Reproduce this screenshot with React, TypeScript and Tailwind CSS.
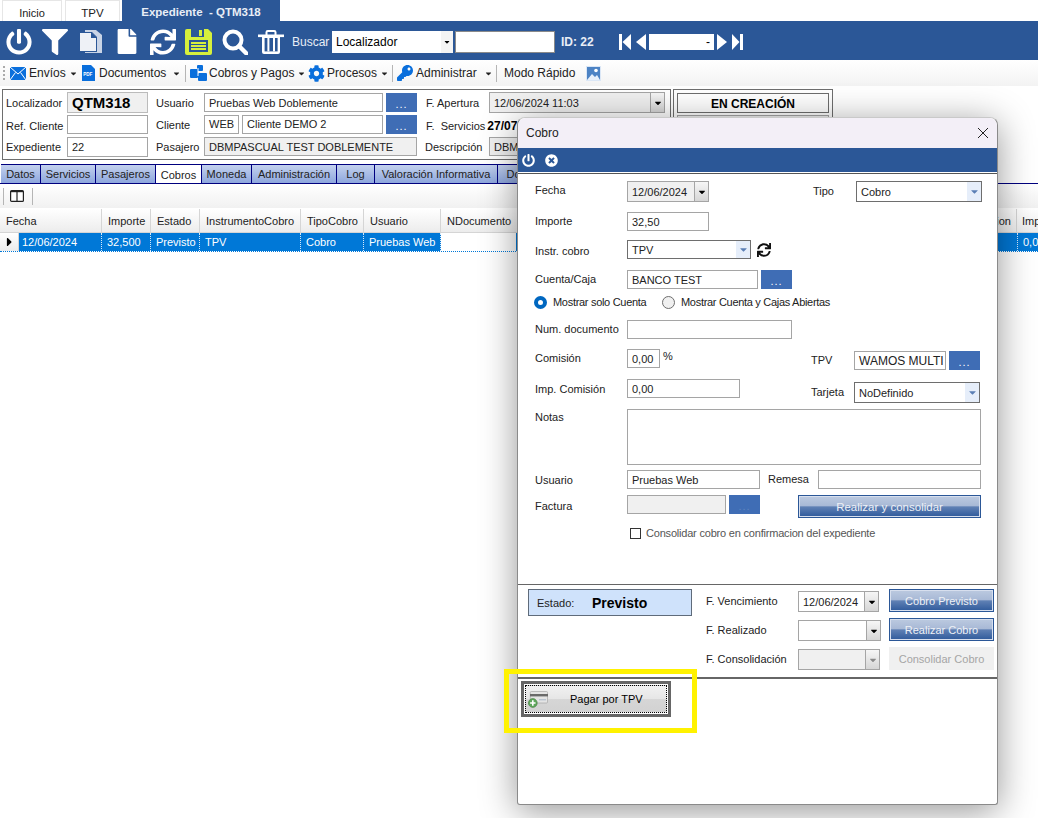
import type { ReactNode } from 'react'
import {
  FaPowerOff,
  FaFilter,
  FaFile,
  FaSync,
  FaTimesCircle,
  FaKey,
  FaCog,
  FaCaretDown,
  FaCaretRight,
} from 'react-icons/fa'

function Field({ className = '', children }: { className?: string; children?: ReactNode }) {
  return (
    <div className={`flex items-center border border-[#a5a5a5] pl-1 overflow-hidden shrink-0 ${className}`}>
      {children}
    </div>
  )
}

function Dots({ className = '' }: { className?: string }) {
  return (
    <div className={`flex justify-center items-end pb-[2px] bg-[#3f6db5] text-white text-[11px] leading-[12px] tracking-[1px] shrink-0 ${className}`}>
      ...
    </div>
  )
}

function DateDrop({ className = '', value, dark = true }: { className?: string; value?: string; dark?: boolean }) {
  return (
    <div className={`flex border border-[#a5a5a5] shrink-0 ${className}`}>
      <div className="flex-1 pl-1 flex items-center overflow-hidden">{value}</div>
      <div className="w-[14px] border-l border-[#a5a5a5] bg-[linear-gradient(#f6f6f6,#d6d6d6)] flex items-center justify-center">
        <FaCaretDown className={`w-[10px] h-[10px] ${dark ? 'text-black' : 'text-[#8a8a8a]'}`} />
      </div>
    </div>
  )
}

function Combo({ className = '', value }: { className?: string; value: string }) {
  return (
    <div className={`flex border border-[#6e6e6e] bg-white shrink-0 ${className}`}>
      <div className="flex-1 pl-1 flex items-center">{value}</div>
      <div className="w-[14px] bg-[#e6eefa] flex items-center justify-center">
        <FaCaretDown className="w-[11px] h-[11px] text-[#5b7fb5]" />
      </div>
    </div>
  )
}

function BlueButton({ className = '', children }: { className?: string; children: ReactNode }) {
  return (
    <div className={`flex items-center justify-center border border-[#2b5797] outline outline-1 -outline-offset-2 outline-[#d7dfee] text-[#eef1f6] bg-[linear-gradient(#bccae0_0%,#a8b9d6_46%,#5f80b4_52%,#2f5a9b_100%)] shrink-0 ${className}`}>
      {children}
    </div>
  )
}

function Caret({ className = '' }: { className?: string }) {
  return <FaCaretDown className={`w-[9px] h-[9px] text-[#222] shrink-0 ${className}`} />
}

function ToolbarSep({ className = '' }: { className?: string }) {
  return <div className={`w-px h-[17px] bg-[#b5b5b5] shrink-0 ${className}`} />
}

function SaveIcon() {
  return (
    <svg viewBox="0 0 27 26" className="w-[27px] h-[26px] shrink-0">
      <path d="M2 0h21l4 4v20a2 2 0 0 1-2 2H2a2 2 0 0 1-2-2V2a2 2 0 0 1 2-2z" fill="#d6f03c" />
      <rect x="6" y="0" width="13" height="8" fill="#2b5797" />
      <rect x="14" y="1" width="3" height="6" fill="#d6f03c" />
      <rect x="4" y="11" width="19" height="12" fill="#2b5797" />
      <rect x="6" y="13" width="15" height="2" fill="#d6f03c" />
      <rect x="6" y="16" width="15" height="2" fill="#d6f03c" />
      <rect x="6" y="19" width="15" height="2" fill="#d6f03c" />
    </svg>
  )
}

function CopyIcon() {
  return (
    <svg viewBox="0 0 23 23" className="w-[23px] h-[23px] shrink-0">
      <path d="M6 0h11l6 5v18H6z" fill="#c9d4e6" />
      <path d="M0 2h13l5 5v15H0z" fill="#2b5797" />
      <path d="M1 3h11.5l4.5 4.5V21H1z" fill="#eef1f6" />
      <path d="M12 2l6 6h-6z" fill="#2b5797" />
    </svg>
  )
}

function SearchIcon() {
  return (
    <svg viewBox="0 0 26 26" className="w-[26px] h-[26px] shrink-0">
      <circle cx="11" cy="11" r="8.5" fill="none" stroke="#fff" strokeWidth="4" />
      <path d="M17 17l7.5 7.5" stroke="#fff" strokeWidth="4.4" strokeLinecap="round" />
    </svg>
  )
}

function TrashIcon() {
  return (
    <svg viewBox="0 0 26 24" className="w-[26px] h-[24px] shrink-0">
      <path d="M0 4.5h26v2.6H0z" fill="#fff" />
      <path d="M8.5 5V2.2A1.2 1.2 0 0 1 9.7 1h6.6a1.2 1.2 0 0 1 1.2 1.2V5" fill="none" stroke="#fff" strokeWidth="2" />
      <path d="M4 6.5h18V22a2 2 0 0 1-2 2H6a2 2 0 0 1-2-2z" fill="#fff" />
      <rect x="6.6" y="8" width="13" height="13.4" fill="#2b5797" />
      <rect x="9.4" y="8" width="2" height="13.4" fill="#fff" />
      <rect x="15" y="8" width="2" height="13.4" fill="#fff" />
    </svg>
  )
}

function NavFirst() {
  return (
    <svg viewBox="0 0 12 16" className="w-[12px] h-[16px] shrink-0">
      <rect width="3" height="16" fill="#fff" />
      <path d="M12 0v16L3.5 8z" fill="#fff" />
    </svg>
  )
}

function NavPrev() {
  return (
    <svg viewBox="0 0 10 16" className="w-[10px] h-[16px] shrink-0">
      <path d="M10 0v16L0 8z" fill="#fff" />
    </svg>
  )
}

function NavNext() {
  return (
    <svg viewBox="0 0 10 16" className="w-[10px] h-[16px] shrink-0">
      <path d="M0 0v16L10 8z" fill="#fff" />
    </svg>
  )
}

function NavLast() {
  return (
    <svg viewBox="0 0 11 16" className="w-[11px] h-[16px] shrink-0">
      <rect x="8" width="3" height="16" fill="#fff" />
      <path d="M0 0v16L7.5 8z" fill="#fff" />
    </svg>
  )
}

function MailIcon() {
  return (
    <svg viewBox="0 0 16 13" className="w-[16px] h-[13px] shrink-0">
      <rect width="16" height="13" fill="#0a6fdc" />
      <path d="M0 0l8 7 8-7M0 13l5.5-7.5M16 13l-5.5-7.5" fill="none" stroke="#fff" strokeWidth="1" />
    </svg>
  )
}

function PdfIcon() {
  return (
    <svg viewBox="0 0 13 16" className="w-[13px] h-[16px] shrink-0">
      <path d="M0 0h9l4 4v12H0z" fill="#0a6fdc" />
      <text x="1.2" y="10.5" fontSize="4.6" fontWeight="700" fill="#fff" fontFamily="Liberation Sans, sans-serif">PDF</text>
    </svg>
  )
}

function CobrosIcon() {
  return (
    <svg viewBox="0 0 17 16" className="w-[17px] h-[16px] shrink-0">
      <rect x="0" y="4" width="8" height="9" rx="1" fill="#0a6fdc" />
      <rect x="7" y="0" width="6" height="6" rx="1" fill="#0a6fdc" />
      <rect x="8" y="8" width="9" height="8" rx="1" fill="#0a6fdc" />
      <path d="M8 3v8" stroke="#fff" strokeWidth="1" />
    </svg>
  )
}

function PictureIcon() {
  return (
    <svg viewBox="0 0 15 15" className="w-[15px] h-[15px] shrink-0">
      <rect width="15" height="15" fill="#dbe7f6" />
      <rect x="1" y="1" width="13" height="13" fill="#4d83c4" />
      <path d="M1 14l5-6 3 3 2-2 3 5z" fill="#e8f0fa" />
      <circle cx="10" cy="4.5" r="1.8" fill="#fff" />
    </svg>
  )
}

function CardPlusIcon() {
  return (
    <svg viewBox="0 0 20 17" className="w-[20px] h-[17px] shrink-0">
      <rect x="2.3" y="0.5" width="17.2" height="11.5" rx="1" fill="#e4e4e4" stroke="#a8a8a8" strokeWidth="0.7" />
      <rect x="2" y="3" width="18" height="2.4" fill="#6a6a6a" />
      <rect x="11" y="8" width="7" height="1.4" fill="#b9c4d0" />
      <circle cx="4.8" cy="12" r="4.4" fill="#5fa75c" stroke="#3f7c3d" strokeWidth="0.6" />
      <path d="M4.8 9.3v5.4M2.1 12h5.4" stroke="#fff" strokeWidth="1.6" />
    </svg>
  )
}

const mainTabs = [
  { label: 'Datos', w: 'w-[40px]' },
  { label: 'Servicios', w: 'w-[55px]' },
  { label: 'Pasajeros', w: 'w-[60px]' },
  { label: 'Cobros', w: 'w-[46px]', active: true },
  { label: 'Moneda', w: 'w-[50px]' },
  { label: 'Administración', w: 'w-[85px]' },
  { label: 'Log', w: 'w-[38px]' },
  { label: 'Valoración Informativa', w: 'w-[123px]' },
  { label: 'Documentos', w: 'w-[80px]' },
]

const gridCols = [
  { head: 'Fecha', cell: '12/06/2024', w: 'w-[83px]' },
  { head: 'Importe', cell: '32,500', w: 'w-[49px]' },
  { head: 'Estado', cell: 'Previsto', w: 'w-[49px]' },
  { head: 'InstrumentoCobro', cell: 'TPV', w: 'w-[101px]' },
  { head: 'TipoCobro', cell: 'Cobro', w: 'w-[63px]' },
  { head: 'Usuario', cell: 'Pruebas Web', w: 'w-[77px]' },
]

function CobroDialog() {
  return (
    <div className="absolute left-[517px] top-[117px] w-[481px] h-[688px] flex flex-col bg-white rounded-t-lg rounded-b-[3px] border border-[#8a8a8a] border-t-[#c9c9c9] shadow-[0_6px_36px_rgba(0,0,0,0.42)] text-[#222]">
      <div className="h-[30px] bg-[#f3eff7] rounded-t-lg flex items-center justify-between pl-2 pr-[8px] shrink-0 text-[12px]">
        <span>Cobro</span>
        <svg viewBox="0 0 12 12" className="w-[12px] h-[12px]">
          <path d="M1 1l10 10M11 1L1 11" stroke="#222" strokeWidth="1" />
        </svg>
      </div>
      <div className="h-[24px] bg-[#2b5797] flex items-center gap-[10px] pl-[4px] shrink-0">
        <FaPowerOff className="w-[13px] h-[13px] text-white" />
        <FaTimesCircle className="w-[13px] h-[13px] text-white" />
      </div>
      <div className="border-t border-[#555] mt-px h-[411px] shrink-0 flex flex-col pl-[17px]">
        <div className="flex mt-[7px] h-[21px]">
          <div className="w-[92px] leading-[19px]">Fecha</div>
          <div className="flex w-[82px] border border-[#a5a5a5] bg-[#f0f0f0]">
            <div className="flex-1 pl-1 flex items-center">12/06/2024</div>
            <div className="w-[14px] border-l border-[#a5a5a5] bg-[linear-gradient(#f6f6f6,#d6d6d6)] flex items-center justify-center">
              <FaCaretDown className="w-[10px] h-[10px] text-black" />
            </div>
          </div>
          <div className="ml-[104px] w-[43px] leading-[21px]">Tipo</div>
          <Combo className="w-[126px]" value="Cobro" />
        </div>
        <div className="flex mt-[10px] h-[19px]">
          <div className="w-[92px] leading-[18px]">Importe</div>
          <Field className="w-[82px]">32,50</Field>
        </div>
        <div className="flex mt-[9px] h-[19px] items-center">
          <div className="w-[92px] pt-[2px]">Instr. cobro</div>
          <Combo className="w-[124px] h-[19px]" value="TPV" />
          <FaSync className="ml-[6px] w-[14px] h-[14px] text-[#111]" />
        </div>
        <div className="flex mt-[11px] h-[19px]">
          <div className="w-[92px] leading-[19px]">Cuenta/Caja</div>
          <Field className="w-[131px]">BANCO TEST</Field>
          <Dots className="ml-[3px] w-[31px]" />
        </div>
        <div className="flex mt-[6px] h-[14px] items-center -ml-[1px] tracking-[-0.3px]">
          <div className="w-[13px] h-[13px] rounded-full border-[4px] border-[#0067c0] bg-white" />
          <span className="ml-[6px] w-[109px]">Mostrar solo Cuenta</span>
          <div className="w-[13px] h-[13px] rounded-full border border-[#6e6e6e] bg-[#f0f0f0]" />
          <span className="ml-[6px]">Mostrar Cuenta y Cajas Abiertas</span>
        </div>
        <div className="flex mt-[11px] h-[19px]">
          <div className="w-[92px] leading-[19px]">Num. documento</div>
          <Field className="w-[165px]" />
        </div>
        <div className="flex mt-[10px] h-[21px]">
          <div className="w-[92px] leading-[19px]">Comisión</div>
          <Field className="w-[33px] h-[19px]">0,00</Field>
          <span className="ml-[3px] w-[148px] text-[11px]">%</span>
          <div className="w-[43px] pt-[2px] leading-[19px]">TPV</div>
          <Field className="w-[92px] h-[19px] mt-[2px] text-[12px]">WAMOS MULTI</Field>
          <Dots className="ml-[3px] w-[31px] h-[19px] mt-[2px]" />
        </div>
        <div className="flex mt-[9px] h-[24px]">
          <div className="w-[92px] leading-[21px]">Imp. Comisión</div>
          <Field className="w-[113px] h-[19px]">0,00</Field>
          <div className="ml-[71px] w-[43px] pt-[3px] leading-[21px]">Tarjeta</div>
          <Combo className="w-[126px] h-[21px] mt-[3px]" value="NoDefinido" />
        </div>
        <div className="flex mt-[6px] h-[56px]">
          <div className="w-[92px] leading-[16px]">Notas</div>
          <div className="w-[354px] border border-[#a5a5a5]" />
        </div>
        <div className="flex mt-[5px] h-[19px]">
          <div className="w-[92px] leading-[21px]">Usuario</div>
          <Field className="w-[133px]">Pruebas Web</Field>
          <div className="ml-[8px] w-[50px] leading-[19px]">Remesa</div>
          <Field className="w-[163px]" />
        </div>
        <div className="flex mt-[6px] h-[23px]">
          <div className="w-[92px] leading-[22px]">Factura</div>
          <Field className="w-[99px] h-[19px] bg-[#f0f0f0]" />
          <Dots className="ml-[3px] w-[31px] h-[19px] !text-[#5f85bf]" />
          <BlueButton className="ml-[38px] w-[183px] h-[23px] text-[11.5px]">Realizar y consolidar</BlueButton>
        </div>
        <div className="flex mt-[8px] ml-[95px] items-center h-[14px]">
          <div className="w-[11px] h-[11px] border border-[#333]" />
          <span className="ml-[5px] text-[#555] tracking-[-0.2px]">Consolidar cobro en confirmacion del expediente</span>
        </div>
      </div>
      <div className="border-t border-[#666] h-[93px] shrink-0 flex pl-[10px]">
        <div className="w-[164px] h-[27px] mt-[4px] border border-[#5f6b7a] bg-[#cfe2fb] flex items-center pl-2 shrink-0">
          <span className="w-[55px]">Estado:</span>
          <span className="font-bold text-[14px] text-black">Previsto</span>
        </div>
        <div className="ml-[14px] flex flex-col w-[92px] shrink-0 leading-[21px]">
          <div className="h-[21px] mt-[6px]">F. Vencimiento</div>
          <div className="h-[21px] mt-[8px]">F. Realizado</div>
          <div className="h-[21px] mt-[8px]">F. Consolidación</div>
        </div>
        <div className="flex flex-col shrink-0 w-[91px]">
          <DateDrop className="w-[81px] h-[21px] mt-[6px]" value="12/06/2024" />
          <DateDrop className="w-[83px] h-[21px] mt-[8px]" />
          <DateDrop className="w-[82px] h-[21px] mt-[8px] bg-[#f0f0f0]" dark={false} />
        </div>
        <div className="flex flex-col shrink-0">
          <BlueButton className="w-[105px] h-[23px] mt-[4px]">Cobro Previsto</BlueButton>
          <BlueButton className="w-[105px] h-[23px] mt-[6px]">Realizar Cobro</BlueButton>
          <div className="w-[105px] h-[23px] mt-[6px] bg-[#f0f0f0] text-[#a5a5a5] flex items-center justify-center">
            Consolidar Cobro
          </div>
        </div>
      </div>
      <div className="border-t-2 border-[#666] flex-1 pl-[3px] pt-[2px]">
        <div className="w-[150px] h-[36px] border-[3px] border-[#666] p-[1px] bg-white">
          <div className="h-full border border-dotted border-black flex items-center pl-[2px] bg-[linear-gradient(#f1f1f1_0%,#e6e6e6_50%,#d6d6d6_52%,#d2d2d2_100%)]">
            <CardPlusIcon />
            <span className="ml-[22px] text-black">Pagar por TPV</span>
          </div>
        </div>
      </div>
    </div>
  )
}

export default function App() {
  return (
    <div className="relative w-[1038px] h-[818px] overflow-hidden bg-white text-[11px] leading-[14px] text-[#222] whitespace-nowrap font-['Liberation_Sans',Arial,sans-serif]">
      <div className="flex h-[21px] pl-[2px]">
        <div className="w-[60px] border border-b-0 border-[#e6e6e6] flex items-center justify-center pt-[3px]">Inicio</div>
        <div className="ml-[3px] w-[55px] border border-b-0 border-[#e6e6e6] flex items-center justify-center pt-[3px] text-[11.5px]">TPV</div>
        <div className="ml-[2px] w-[158px] bg-[#2b5797] text-[#e9eef6] font-bold text-[11.5px] flex items-center justify-center pt-[3px] whitespace-pre">
          Expediente  - QTM318
        </div>
      </div>

      <div className="h-[39px] bg-[#2b5797] flex items-center pl-[6px] pt-[2px] text-white text-[12px]">
        <FaPowerOff className="w-[26px] h-[26px]" />
        <FaFilter className="ml-[10px] w-[26px] h-[26px]" />
        <div className="ml-[11px]"><CopyIcon /></div>
        <FaFile className="ml-[13px] w-[24px] h-[25px]" />
        <FaSync className="ml-[11px] w-[26px] h-[26px]" />
        <div className="ml-[9px]"><SaveIcon /></div>
        <div className="ml-[10px]"><SearchIcon /></div>
        <div className="ml-[10px]"><TrashIcon /></div>
        <span className="ml-[8px] w-[40px] text-[#e9eef6]">Buscar</span>
        <div className="w-[121px] h-[22px] bg-white text-black flex items-center pl-1 justify-between">
          Localizador
          <div className="w-[12px] h-full bg-[#f4f4f4] flex items-center justify-center">
            <FaCaretDown className="w-[8px] h-[8px]" />
          </div>
        </div>
        <div className="ml-[2px] w-[100px] h-[22px] bg-white border border-[#8a8a8a]" />
        <span className="ml-[6px] w-[58px] font-bold text-[#e9eef6]">ID: 22</span>
        <NavFirst />
        <div className="ml-[5px]"><NavPrev /></div>
        <div className="ml-[3px] w-[65px] h-[16px] bg-white text-black flex items-center justify-end pr-1">-</div>
        <div className="ml-[3px]"><NavNext /></div>
        <div className="ml-[5px]"><NavLast /></div>
      </div>

      <div className="h-[26px] bg-[linear-gradient(#ffffff,#f3f3f3)] flex items-center pl-[3px] text-[#222] text-[12px]">
        <div className="w-[2px] h-[14px] border-l-2 border-dotted border-[#aaa]" />
        <div className="ml-[5px]"><MailIcon /></div>
        <span className="ml-[3px] w-[40px]">Envíos</span>
        <Caret />
        <div className="ml-[4px]"><PdfIcon /></div>
        <span className="ml-[4px] w-[69px]">Documentos</span>
        <Caret className="ml-[4px]" />
        <ToolbarSep className="ml-[4px]" />
        <div className="ml-[4px]"><CobrosIcon /></div>
        <span className="ml-[2px] w-[88px]">Cobros y Pagos</span>
        <Caret />
        <FaCog className="ml-[2px] w-[17px] h-[17px] text-[#0a6fdc]" />
        <span className="ml-[2px] w-[53px]">Procesos</span>
        <Caret />
        <ToolbarSep className="ml-[3px]" />
        <FaKey className="ml-[4px] w-[16px] h-[16px] text-[#0a6fdc]" />
        <span className="ml-[3px] w-[68px]">Administrar</span>
        <Caret />
        <ToolbarSep className="ml-[3px]" />
        <span className="ml-[7px] w-[82px]">Modo Rápido</span>
        <PictureIcon />
      </div>

      <div className="flex mt-[3px] pl-[2px] h-[71px] bg-white">
        <div className="w-[669px] border border-[#6e6e6e] flex flex-col pl-[3px] shrink-0">
          <div className="flex h-[21px] mt-[2px] items-center">
            <span className="w-[61px]">Localizador</span>
            <div className="w-[81px] h-[21px] bg-[#f0f0f0] border border-[#bbb] flex items-center pl-1 font-bold text-[15px] text-black">QTM318</div>
            <span className="ml-[8px] w-[48px]">Usuario</span>
            <Field className="w-[179px] h-[19px]">Pruebas Web Doblemente</Field>
            <Dots className="ml-[3px] w-[31px] h-[19px]" />
            <span className="ml-[9px] w-[63px]">F. Apertura</span>
            <DateDrop className="w-[176px] h-[21px] bg-[#f0f0f0]" value="12/06/2024 11:03" />
          </div>
          <div className="flex h-[20px] mt-[1px] items-center">
            <span className="w-[61px] pt-[3px]">Ref. Cliente</span>
            <Field className="w-[81px] h-[19px]" />
            <span className="ml-[8px] w-[48px] pt-[2px]">Cliente</span>
            <Field className="w-[35px] h-[19px]">WEB</Field>
            <Field className="ml-[3px] w-[141px] h-[19px]">Cliente DEMO 2</Field>
            <Dots className="ml-[3px] w-[31px] h-[19px]" />
            <span className="ml-[9px] pt-[3px] whitespace-pre">F.  Servicios</span>
            <span className="ml-[2px] pt-[3px] font-bold text-[12px] text-black">27/07/2024</span>
          </div>
          <div className="flex h-[21px] mt-[2px] items-center">
            <span className="w-[61px]">Expediente</span>
            <Field className="w-[81px] h-[20px]">22</Field>
            <span className="ml-[8px] w-[48px]">Pasajero</span>
            <Field className="w-[213px] h-[19px] bg-[#f0f0f0]">DBMPASCUAL TEST DOBLEMENTE</Field>
            <span className="ml-[8px] w-[64px]">Descripción</span>
            <Field className="w-[176px] h-[19px] bg-[#f0f0f0]">DBMPASCUAL TEST</Field>
          </div>
        </div>
        <div className="ml-[2px] w-[160px] border border-[#6e6e6e] px-[3px] pt-[3px] shrink-0 flex flex-col gap-[2px]">
          <div className="h-[20px] border border-[#6e6e6e] flex items-center justify-center pt-px font-bold text-[12px] text-black">EN CREACIÓN</div>
          <div className="h-[20px] border border-[#a5a5a5] bg-[#f0f0f0]" />
        </div>
      </div>

      <div className="flex h-[20px] mt-[4px] pl-[1px] border-b border-[#00007f] overflow-hidden">
        {mainTabs.map((t) => (
          <div
            key={t.label}
            className={`${t.w} shrink-0 flex items-center justify-center border-t border-r border-[#00007f] ${
              t.active ? 'bg-white h-[20px] border-l-0' : 'bg-[linear-gradient(#c3d1ee,#8ea7dd)] h-[19px]'
            }`}
          >
            {t.label}
          </div>
        ))}
      </div>

      <div className="h-[24px] bg-[linear-gradient(#ffffff,#f1f1f1)] flex items-center pl-[3px]">
        <ToolbarSep className="h-[15px]" />
        <svg viewBox="0 0 14 12" className="ml-[6px] w-[14px] h-[12px]">
          <rect x="0.6" y="0.6" width="12.8" height="10.8" rx="1" fill="#fff" stroke="#222" strokeWidth="1.2" />
          <path d="M7 1v10" stroke="#222" strokeWidth="1.2" />
          <path d="M1 1.6h12" stroke="#222" strokeWidth="1.2" />
        </svg>
        <ToolbarSep className="ml-[8px] h-[15px]" />
      </div>

      <div className="flex h-[24px] mt-px">
        {gridCols.map((c, i) => (
          <div
            key={c.head}
            className={`${i === 0 ? 'w-[102px]' : c.w} shrink-0 bg-[linear-gradient(#ffffff,#ececec)] border-r border-b border-[#d5d5d5] flex items-center pl-[6px]`}
          >
            {c.head}
          </div>
        ))}
        <div className="w-[100px] shrink-0 bg-[linear-gradient(#ffffff,#ececec)] border-r border-b border-[#d5d5d5] flex items-center pl-[6px]">NDocumento</div>
        <div className="w-[476px] shrink-0 bg-[linear-gradient(#ffffff,#ececec)] border-r border-b border-[#d5d5d5] flex items-center justify-end pr-[5px]">Observacion</div>
        <div className="flex-1 min-w-0 bg-[linear-gradient(#ffffff,#ececec)] border-b border-[#d5d5d5] flex items-center pl-[5px] overflow-hidden">Imp</div>
      </div>

      <div className="flex h-[19px] border-b border-dotted border-[#0078d7]">
        <div className="w-[19px] shrink-0 bg-[linear-gradient(#ffffff,#ececec)] flex items-center justify-center border-r border-[#d5d5d5]">
          <FaCaretRight className="w-[11px] h-[14px] text-black" />
        </div>
        {gridCols.map((c, i) => (
          <div key={c.head} className={`${c.w} shrink-0 bg-[#0078d7] text-white border-r border-dotted border-[#d7e9f9] flex items-center ${i === 0 ? 'pl-[3px]' : 'pl-[5px]'} overflow-hidden`}>
            {c.cell}
          </div>
        ))}
        <div className="w-[75px] shrink-0 bg-white" />
        <div className="flex-1 bg-[#0078d7] flex justify-end">
          <div className="w-[21px] border-l border-dotted border-[#d7e9f9] text-white flex items-center pl-[5px] overflow-hidden">0,0</div>
        </div>
      </div>

      <CobroDialog />

      <div className="absolute left-[504px] top-[669px] w-[193px] h-[64px] border-[5px] border-[#fff200]" />
    </div>
  )
}
